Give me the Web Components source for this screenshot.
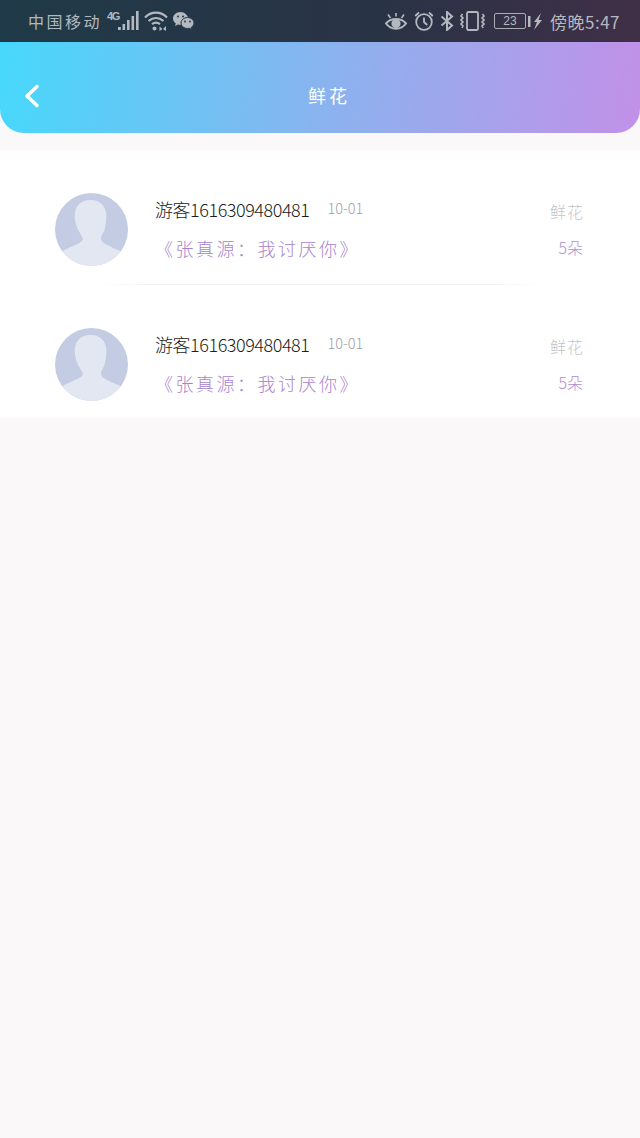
<!DOCTYPE html>
<html lang="zh">
<head>
<meta charset="utf-8">
<title>鲜花</title>
<style>
  html, body { margin: 0; padding: 0; background: #fbf8f9; }
  body { width: 640px; height: 1138px; overflow: hidden; font-family: "Noto Sans CJK SC", "Noto Sans", sans-serif; }
</style>
</head>
<body>
<status-bar></status-bar>
<nav-header>鲜花</nav-header>
<flower-list>
  <flower-row user="游客1616309480481" date="10-01" work="《张真源：我讨厌你》" count="5朵" label="鲜花" divider></flower-row>
  <flower-row user="游客1616309480481" date="10-01" work="《张真源：我讨厌你》" count="5朵" label="鲜花"></flower-row>
</flower-list>

<script>
// barra de estado del telefono
class StatusBar extends HTMLElement {
  connectedCallback() {
    const shadow = this.attachShadow({ mode: 'open' });
    shadow.innerHTML = `
    <style>
      :host {
        display: flex;
        height: 42px;
        box-sizing: border-box;
        padding: 0 20px 0 28px;
        align-items: center;
        justify-content: space-between;
        background: linear-gradient(90deg, #1f3a48, #2a3346 60%, #402f47);
        color: #b4b8bf;
        font: 400 16px "Noto Sans CJK SC", sans-serif;
      }
      .side { display: flex; align-items: center; }
      svg { display: block; flex: none; }
      .carrier { letter-spacing: 2.500px; }
      .net { font: 700 11px/11px "Liberation Sans", sans-serif; letter-spacing: -1.500px; width: 11px; margin: -10px 0 0 5px; }
      .batt { width: 32px; height: 16px; box-sizing: border-box; border: 1px solid #a8acb4; border-radius: 2px;
              font: 12px/14px "Liberation Sans", sans-serif; text-align: center; margin-left: 9px; }
      .time { font-size: 17px; letter-spacing: .5px; margin-left: 8px; }
    </style>
    <div class="side">
      <span class="carrier">中国移动</span><span class="net">4G</span>
      <svg width="21" height="20" viewBox="0 0 21 20" style="margin-top:-1px" fill="#b4b8bf">
        <rect x="0" y="16" width="2.800" height="3"/><rect x="4.500" y="13" width="2.600" height="6"/><rect x="9" y="9" width="2.600" height="10"/><rect x="13.500" y="5" width="2.600" height="14"/><rect x="18" y="0" width="2.600" height="19"/>
      </svg>
      <svg width="24" height="20" viewBox="0 0 24 20" style="margin:-1px 0 0 5px" fill="none" stroke="#b4b8bf" stroke-width="2.200">
        <path d="M1 6.500c6-6.500 16-6.500 22 0"/><path d="M4.500 10c4.500-4 10.500-4 15 0"/><path d="M8 13.200c2.500-2 5.500-2 8 0"/>
        <circle cx="10.500" cy="17.500" r="2" fill="#b4b8bf" stroke="none"/>
        <path d="M15.500 15.500l3 2.500l-3 2zM22 15l-3 3l3 2z" fill="#b4b8bf" stroke="none"/>
      </svg>
      <svg width="21" height="19" viewBox="0 0 21 19" style="margin:0 0 0 5px" fill="#b4b8bf">
        <path d="M7.500 0C3.400 0 0 2.900 0 6.500c0 2.100 1.100 3.900 2.800 5L2 14l3-1.500c.8.200 1.600.3 2.500.3c4.100 0 7.500-2.900 7.500-6.300S11.600 0 7.500 0z"/>
        <path d="M14.500 5.500c-3.600 0-6.500 2.500-6.500 5.500s2.900 5.500 6.500 5.500c.7 0 1.400-.1 2-.3l2.500 1.500l-.6-2.500c1.600-1 2.600-2.500 2.600-4.200c0-3-2.900-5.500-6.500-5.500z" stroke="#263644" stroke-width="1"/>
        <circle cx="5" cy="4.500" r="1" fill="#263644"/><circle cx="10" cy="4.500" r="1" fill="#263644"/>
        <circle cx="12" cy="9.500" r=".9" fill="#263644"/><circle cx="17" cy="9.500" r=".9" fill="#263644"/>
      </svg>
    </div>
    <div class="side">
      <svg width="22" height="18" viewBox="0 0 22 18" style="margin-top:1px" fill="none" stroke="#b4b8bf" stroke-width="2">
        <path d="M1 10.500c5-6 15-6 20 0c-5 7-15 7-20 0z"/><circle cx="11" cy="10.500" r="3.600" fill="#b4b8bf"/>
        <path d="M3 1.500l2.500 3.500M19 1.500l-2.500 3.500M11 0v3.500" stroke-width="1.600"/>
      </svg>
      <svg width="20" height="20" viewBox="0 0 20 20" style="margin-left:7px" fill="none" stroke="#b4b8bf" stroke-width="1.800">
        <circle cx="10" cy="11" r="7.800"/><path d="M10 6.500V11l3.200 3"/><path d="M1.200 5L5 1.500M18.800 5L15 1.500"/>
      </svg>
      <svg width="14" height="20" viewBox="0 0 14 20" style="margin-left:6px" fill="none" stroke="#b4b8bf" stroke-width="2">
        <path d="M1.500 5.500l10.500 9L7 19V1l5 4.500L1.500 14.500"/>
      </svg>
      <svg width="25" height="20" viewBox="0 0 25 20" style="margin-left:6px" fill="none" stroke="#b4b8bf" stroke-width="1.800">
        <rect x="7" y="1" width="11" height="18" rx="1.500"/>
        <path d="M2.500 3l-1.500 2l2 2l-2 2l2 2l-2 2l2 2l-1 2M22.500 3l1.500 2l-2 2l2 2l-2 2l2 2l-2 2l1 2" stroke-width="1.600"/>
      </svg>
      <div class="batt">23</div>
      <svg width="16" height="17" viewBox="0 0 16 17" fill="#b4b8bf">
        <rect x="2" y="3" width="2.500" height="11"/><path d="M15 0L8 9h3l-3 8l8-10h-3.500z"/>
      </svg>
      <span class="time">傍晚5:47</span>
    </div>`;
  }
}
customElements.define('status-bar', StatusBar);

class NavHeader extends HTMLElement {
  connectedCallback() {
    const shadow = this.attachShadow({ mode: 'open' });
    shadow.innerHTML = `
    <style>
      :host {
        display: grid;
        grid-template-columns: 64px 1fr 46px;
        align-items: center;
        height: 91px;
        box-sizing: border-box;
        padding-top: 14px;
        border-radius: 0 0 24px 24px;
        background: linear-gradient(95deg, #47d8fb, #8fb0ee 55%, #c191e8);
        color: #fff;
        font: 400 18px "Noto Sans CJK SC", sans-serif;
      }
      .back { padding-left: 22px; margin-top: 3px; display: flex; }
      .title { text-align: center; letter-spacing: 3px; }
    </style>
    <div class="back">
      <svg width="20" height="26" viewBox="0 0 20 26" fill="none" stroke="#fff" stroke-width="3.500" stroke-linecap="round" stroke-linejoin="round">
        <path d="M15 3.500L5 13l10 9.500"/>
      </svg>
    </div>
    <div class="title"><slot></slot></div>
    <div></div>`;
  }
}
customElements.define('nav-header', NavHeader);

class FlowerList extends HTMLElement {
  connectedCallback() {
    const shadow = this.attachShadow({ mode: 'open' });
    shadow.innerHTML = `
    <style>
      :host { display: block; margin-top: 17px; background: #fff; }
    </style>
    <slot></slot>`;
  }
}
customElements.define('flower-list', FlowerList);

class FlowerRow extends HTMLElement {
  connectedCallback() {
    const shadow = this.attachShadow({ mode: 'open' });
    const hayLinea = this.hasAttribute('divider');
    shadow.innerHTML = `
    <style>
      :host { display: block; }
      .row {
        display: flex;
        align-items: flex-start;
        box-sizing: border-box;
        height: ${hayLinea ? 134 : 133}px;
        padding: 42.500px 57px 0 54.500px;
      }
      .avatar { width: 73px; height: 73px; flex: none; display: block; }
      .info { flex: 1; margin-left: 27.500px; min-width: 0; }
      .top { display: flex; align-items: flex-start; height: 36px; margin-top: -1.500px; }
      .user { color: #1c1c20; font: 300 18px/36px "Noto Sans CJK SC", sans-serif; letter-spacing: -.45px; }
      .date { color: #a0a0a4; font: 300 14.500px/34px "Noto Sans CJK SC", sans-serif; margin-left: 18px; }
      .work { color: #a984cf; font: 300 18px/24px "Noto Sans CJK SC", sans-serif; letter-spacing: 2.500px; margin: 9px 0 0 0; }
      .right { text-align: right; width: 60px; }
      .label { color: #c4c4c8; font: 300 16px/36px "Noto Sans CJK SC", sans-serif; letter-spacing: 1px; margin: .5px -1px 0 0; }
      .count { color: #ae8fd2; font: 300 16px/24px "Noto Sans CJK SC", sans-serif; margin-top: 6px; }
      .line { height: 1px; margin: 0 100px; background: linear-gradient(90deg, #fff, #f0f0f2 12%, #f0f0f2 88%, #fff); }
    </style>
    <div class="row">
      <svg class="avatar" viewBox="0 0 74 74">
        <defs><clipPath id="c"><circle cx="37" cy="37" r="37"/></clipPath></defs>
        <g clip-path="url(#c)">
          <rect width="74" height="74" fill="#c3cce2"/>
          <path d="M36 7C26 7 20 13 20 23C20 31 23 37 25 40C27 44 29 46 28 48C26 51 20 53 7 59V74H67V59C55 54 49 52 47 48C46 46 47 43 49 40C51 36 52 30 52 23C52 13 46 7 36 7z" fill="#e3e7f2"/>
        </g>
      </svg>
      <div class="info">
        <div class="top"><span class="user">${this.getAttribute('user')}</span><span class="date">${this.getAttribute('date')}</span></div>
        <div class="work">${this.getAttribute('work')}</div>
      </div>
      <div class="right">
        <div class="label">${this.getAttribute('label')}</div>
        <div class="count">${this.getAttribute('count')}</div>
      </div>
    </div>
    ${hayLinea ? '<div class="line"></div>' : ''}`;
  }
}
customElements.define('flower-row', FlowerRow);
</script>
</body>
</html>
